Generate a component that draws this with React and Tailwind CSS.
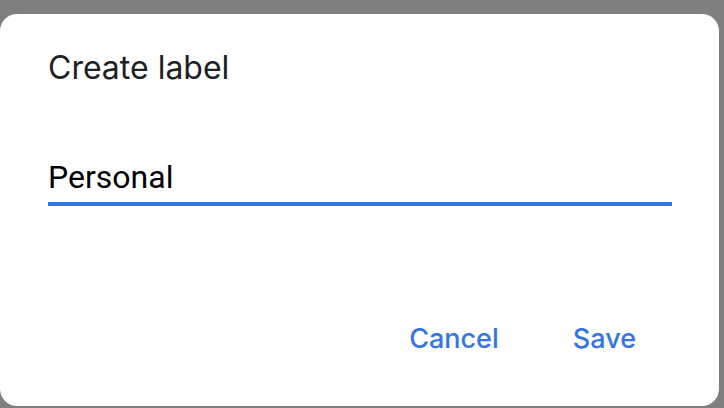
export default function App() {
  return (
    <div className="w-[724px] h-[408px] bg-[#7f7f7f] pt-[14px] overflow-hidden">
      <div className="w-[719px] h-[392px] bg-white rounded-[17px] flex flex-col pl-[48px] pr-[47px]">
        <div className="mt-[34px] text-[32px] leading-[40px] text-[#202124] font-['Inter',sans-serif]">
          Create label
        </div>
        <div className="mt-[69px] flex flex-col">
          <div className="text-[32px] leading-[40px] text-black font-['Roboto',sans-serif]">
            Personal
          </div>
          <div className="h-[4px] bg-[#3574e3] mt-[5px]"></div>
        </div>
        <div className="mt-auto mb-[47px] flex justify-end items-center gap-[74px] pr-[36px] text-[27px] leading-[40px] text-[#3574e3] font-['Inter',sans-serif] font-medium">
          <span>Cancel</span>
          <span>Save</span>
        </div>
      </div>
    </div>
  );
}
